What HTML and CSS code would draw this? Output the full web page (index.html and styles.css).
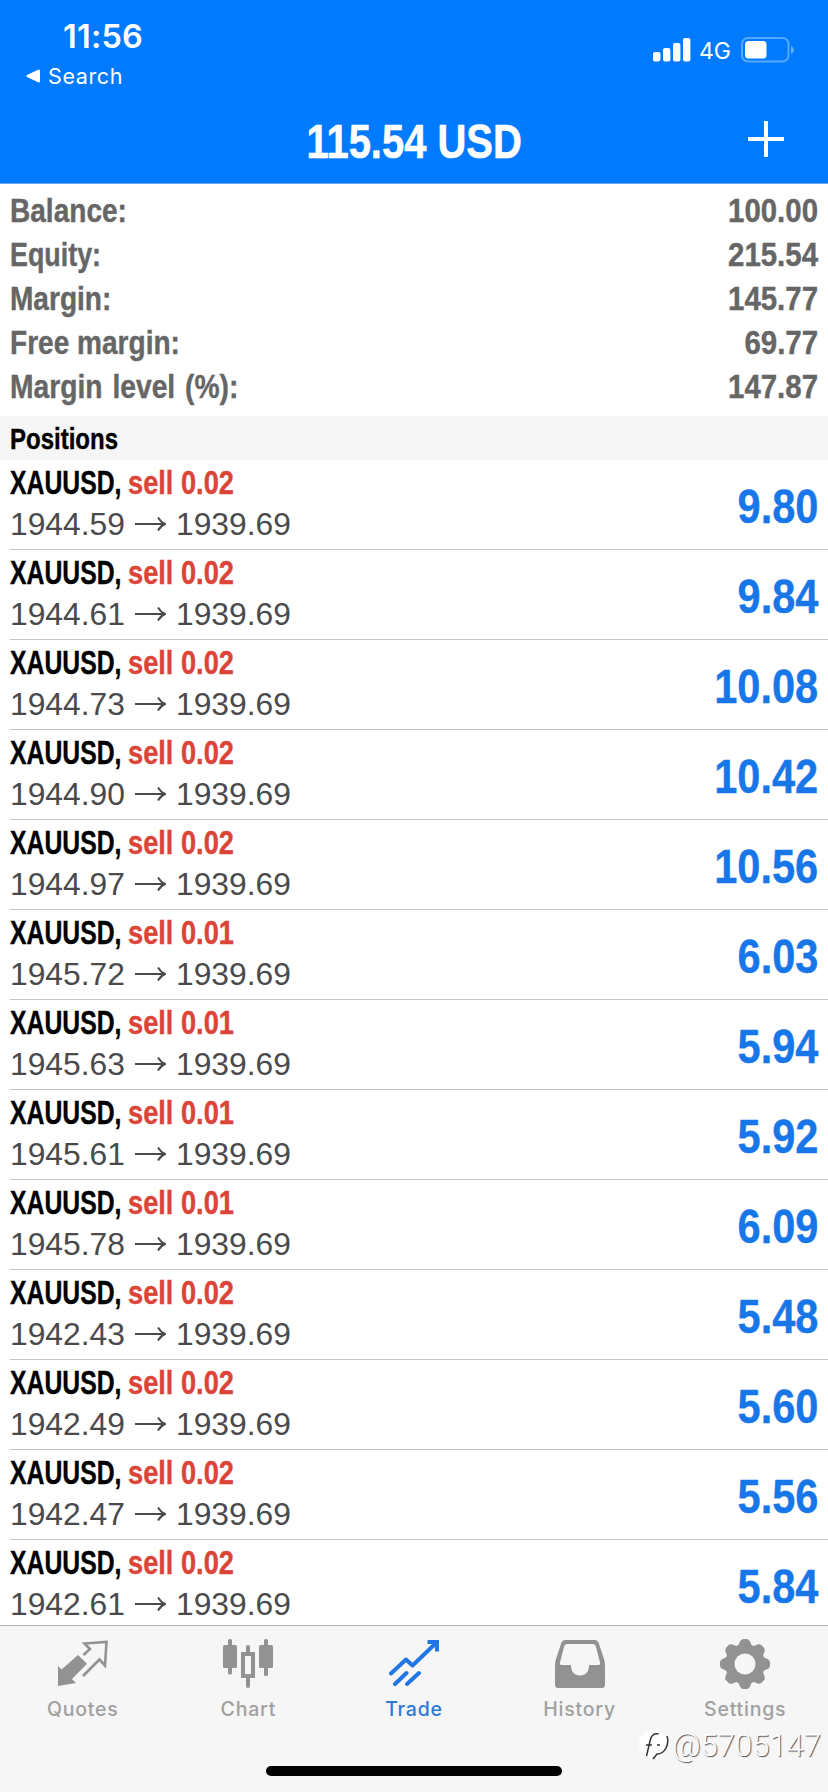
FILE: index.html
```
<!DOCTYPE html>
<html lang="en">
<head>
<meta charset="utf-8">
<title>Trade</title>
<link rel="stylesheet" href="styles.css">
</head>
<body>
<div class="screen">
  <header class="header">
    <div class="status">
      <div class="status-left">
        <div class="clock">11:56</div>
        <div class="back"><svg width="14" height="14" viewBox="0 0 14 14"><path d="M12.500 .5L1 6q-1.200 1 0 2l11.500 5.500q1.500 .3 1.500-1.500V2q0-1.800-1.500-1.500z" fill="#fff"/></svg><span>Search</span></div>
      </div>
      <div class="status-right">
        <svg class="signal" width="38" height="24" viewBox="0 0 38 24" fill="#fff"><rect x="0" y="14" width="7.400" height="9.500" rx="2"/><rect x="10" y="10" width="7.400" height="13.500" rx="2"/><rect x="20" y="5" width="7.400" height="18.500" rx="2"/><rect x="30" y="0" width="7.400" height="23.500" rx="2"/></svg>
        <span class="network">4G</span>
        <svg class="battery" width="54" height="26" viewBox="0 0 54 26"><rect x="1" y="1" width="46.500" height="23.500" rx="6" fill="none" stroke="#55a8ff" stroke-width="2"/><rect x="4" y="4" width="21.500" height="17.500" rx="3.500" fill="#fff"/><path d="M50 9q3 1.500 3 4t-3 4z" fill="#66b1ff"/></svg>
      </div>
    </div>
    <div class="titlebar">
      <h1 class="title"><span>115.54 USD</span></h1>
      <svg class="plus" width="36" height="36" viewBox="0 0 36 36"><path d="M18 0v36M0 18h36" stroke="#fff" stroke-width="4"/></svg>
    </div>
  </header>

  <main class="content">
    <section class="summary">
      <div class="line"><span class="label">Balance:</span><span class="amount">100.00</span></div>
      <div class="line"><span class="label narrow">Equity:</span><span class="amount">215.54</span></div>
      <div class="line"><span class="label">Margin:</span><span class="amount">145.77</span></div>
      <div class="line"><span class="label">Free margin:</span><span class="amount">69.77</span></div>
      <div class="line"><span class="label wide">Margin level (%):</span><span class="amount">147.87</span></div>
    </section>
    <h2 class="section"><span>Positions</span></h2>
    <div class="positions" id="positions"></div>
  </main>

  <nav class="tabs">
    <div class="tab"><svg class="icon" viewBox="0 0 50 50"><path d="M0 27l3.500 3.500L20 16l9 8.800L14 40l4 4L0 47z" fill="#929292"/><path d="M25.500 16l6.500-6-5.500-5.500L48.500 3 47 26.500l-5.500-6L25 37" fill="none" stroke="#929292" stroke-width="2.600"/></svg><span>Quotes</span></div>
    <div class="tab"><svg class="icon" viewBox="0 0 50 50" fill="#929292"><rect x="5" y="0" width="4" height="35.500" rx="1.500"/><rect x="0" y="6" width="14" height="23" rx="1.500"/><rect x="41" y="0" width="4" height="37" rx="1.500"/><rect x="36" y="6" width="14" height="23" rx="1.500"/><path d="M23 14V8q0-2 2-2t2 2v6zM23 38v9q0 2 2 2t2-2v-9z"/><rect x="20" y="15" width="10" height="22" fill="none" stroke="#929292" stroke-width="4"/></svg><span>Chart</span></div>
    <div class="tab active"><svg class="icon" viewBox="0 0 50 50" fill="none" stroke="#2176e6" stroke-width="4" stroke-linecap="round" stroke-linejoin="round"><path d="M2 34.500L17 20.500l6.500 6L46 5M6 45l11.500-11M18 45l12-11"/><path d="M38.500 3H48v9.500" stroke-linecap="butt" stroke-linejoin="miter"/></svg><span>Trade</span></div>
    <div class="tab"><svg class="icon" viewBox="0 0 50 50"><path fill="#929292" fill-rule="evenodd" d="M10.500 1h29q3 0 4.200 3L49 20q1 3 1 6v19.500q0 3.500-3.500 3.500h-43Q0 49 0 45.500V26q0-3 1-6L6.300 4q1.200-3 4.200-3zM12 5q-2 0-2.700 2L5 23.500q-.5 2.500 1.500 2.500H16c0 7 3.500 10.500 9 10.500s9-3.500 9-10.500h9.500q2 0 1.500-2.500L40.700 7Q40 5 38 5z"/></svg><span>History</span></div>
    <div class="tab"><svg class="icon" viewBox="0 0 50 50"><g fill="#929292"><circle cx="25" cy="25" r="20"/><path id="tooth" d="M17.500 8L20 2.500Q21 0 23.500 0h3Q29 0 30 2.500L32.500 8z"/><use href="#tooth" transform="rotate(45 25 25)"/><use href="#tooth" transform="rotate(90 25 25)"/><use href="#tooth" transform="rotate(135 25 25)"/><use href="#tooth" transform="rotate(180 25 25)"/><use href="#tooth" transform="rotate(225 25 25)"/><use href="#tooth" transform="rotate(270 25 25)"/><use href="#tooth" transform="rotate(315 25 25)"/></g><circle cx="25" cy="25" r="10.500" fill="#f6f6f6"/></svg><span>Settings</span></div>
    <div class="home"></div>
    <div class="watermark"><svg width="30" height="34" viewBox="0 0 30 34"><circle cx="14" cy="15" r="14" fill="#fff"/><path d="M7.500 27l4-17q2-6 8-5M7 16h6M18 16h3M28 7q2 6-1 12-3 6-9 6l-4 5" fill="none" stroke="#333" stroke-width="1.500"/></svg><span>@5705147</span></div>
  </nav>
</div>
<script src="positions.js"></script>
</body>
</html>
```
FILE: styles.css
```
* { box-sizing: border-box; }
body { margin: 0; background: #fff; font-family: "Liberation Sans", Arial, sans-serif; }
.screen { width: 828px; height: 1792px; display: flex; flex-direction: column; overflow: hidden; }

.header { height: 184px; flex: none; background: #007aff; border-bottom: 1px solid #6aa9f5; color: #fff; }
.status { height: 96px; display: flex; justify-content: space-between; padding: 0 33px 0 26px; font-family: Inter, sans-serif; }
.clock { margin: 17px 0 0 37px; font-size: 32.5px; line-height: 40px; font-weight: 600; letter-spacing: 0.2px; }
.back { display: flex; align-items: center; gap: 8px; height: 38px; font-size: 21.5px; letter-spacing: 0.6px; }
.status-right { display: flex; align-items: flex-start; padding-top: 37px; }
.signal { margin-top: 1px; }
.network { width: 50px; padding-left: 8px; font-size: 23px; line-height: 28px; }
.titlebar { display: grid; grid-template-columns: 1fr 36px; padding-right: 44px; height: 87px; align-items: start; }
.title { margin: 17px 0 0 80px; font-size: 49px; line-height: 56px; text-align: center; }
.title span { display: inline-block; transform: scaleX(0.815); white-space: nowrap; -webkit-text-stroke: 0.6px; }
.plus { margin-top: 25px; }

.content { flex: 1; min-height: 0; overflow: hidden; }
.summary { height: 232px; padding: 4px 10px 8px; color: #666; }
.line { display: flex; justify-content: space-between; font-size: 34px; line-height: 44px; font-weight: 700; -webkit-text-stroke: 0.4px; }
.label { transform: scaleX(0.825); transform-origin: left; }
.label.narrow { transform: scaleX(0.79); }
.label.wide { transform: scaleX(0.83); word-spacing: 2.5px; }
.amount { transform: scaleX(0.865); transform-origin: right; }
.section { margin: 0; height: 44px; padding-left: 10px; background: #f6f6f6; font-size: 30px; line-height: 45px; }
.section span { display: inline-block; transform: scaleX(0.8); transform-origin: left; -webkit-text-stroke: 0.4px; }

.position { height: 90px; margin-left: 10px; padding-right: 10px; border-bottom: 1px solid #c4c4c6; display: flex; justify-content: space-between; }
.deal { display: grid; grid-template-columns: 118px 1fr; height: 40px; padding-top: 4px; font-size: 33px; line-height: 38px; font-weight: 700; -webkit-text-stroke: 0.4px; }
.symbol { transform: scaleX(0.75); transform-origin: left; white-space: nowrap; }
.side { color: #db4437; transform: scaleX(0.825); transform-origin: left; white-space: nowrap; }
.prices { display: flex; align-items: center; padding-top: 2px; font-size: 31.8px; line-height: 44px; color: #4a4a4c; }
.prices span { width: 115px; }
.arrow { margin: 0 10px; }
.profit { font-size: 48px; line-height: 94px; font-weight: 700; color: #1877e8; transform: scaleX(0.865); transform-origin: right; -webkit-text-stroke: 0.4px; }

.tabs { height: 167px; flex: none; position: relative; display: grid; grid-template-columns: repeat(5, 1fr); background: #f6f6f6; border-top: 1px solid #b2b2b2; }
.tab { display: flex; flex-direction: column; align-items: center; padding-top: 13px; font: 500 19.5px/26px Inter, sans-serif; letter-spacing: 0.8px; color: #a0a0a0; }
.tab span { margin-top: 7px; }
.icon { width: 50px; height: 50px; display: block; }
.active { color: #3078d8; }
.home { position: absolute; left: 266px; top: 140px; width: 296px; height: 10px; border-radius: 5px; background: #000; }
.watermark { position: absolute; right: 7px; top: 102px; display: flex; align-items: center; gap: 3px; font: 300 31px/36px Roboto, sans-serif; color: #fff; text-shadow: 1px 1px 1px #555; }
```
FILE: positions.js
```
const positions = [
  ["0.02", "1944.59", "9.80"],
  ["0.02", "1944.61", "9.84"],
  ["0.02", "1944.73", "10.08"],
  ["0.02", "1944.90", "10.42"],
  ["0.02", "1944.97", "10.56"],
  ["0.01", "1945.72", "6.03"],
  ["0.01", "1945.63", "5.94"],
  ["0.01", "1945.61", "5.92"],
  ["0.01", "1945.78", "6.09"],
  ["0.02", "1942.43", "5.48"],
  ["0.02", "1942.49", "5.60"],
  ["0.02", "1942.47", "5.56"],
  ["0.02", "1942.61", "5.84"]
];
document.getElementById("positions").innerHTML = positions.map(([lots, open, profit]) => `
  <div class="position">
    <div>
      <div class="deal"><span class="symbol">XAUUSD,</span><span class="side">sell ${lots}</span></div>
      <div class="prices"><span>${open}</span><svg class="arrow" width="31" height="16" viewBox="0 0 31 16"><path d="M0 8h29.500M23 1.500q2.500 4.500 7 6.500-4.500 2-7 6.500" fill="none" stroke="#4a4a4c" stroke-width="2"/></svg><span>1939.69</span></div>
    </div>
    <div class="profit">${profit}</div>
  </div>`).join("");
```
